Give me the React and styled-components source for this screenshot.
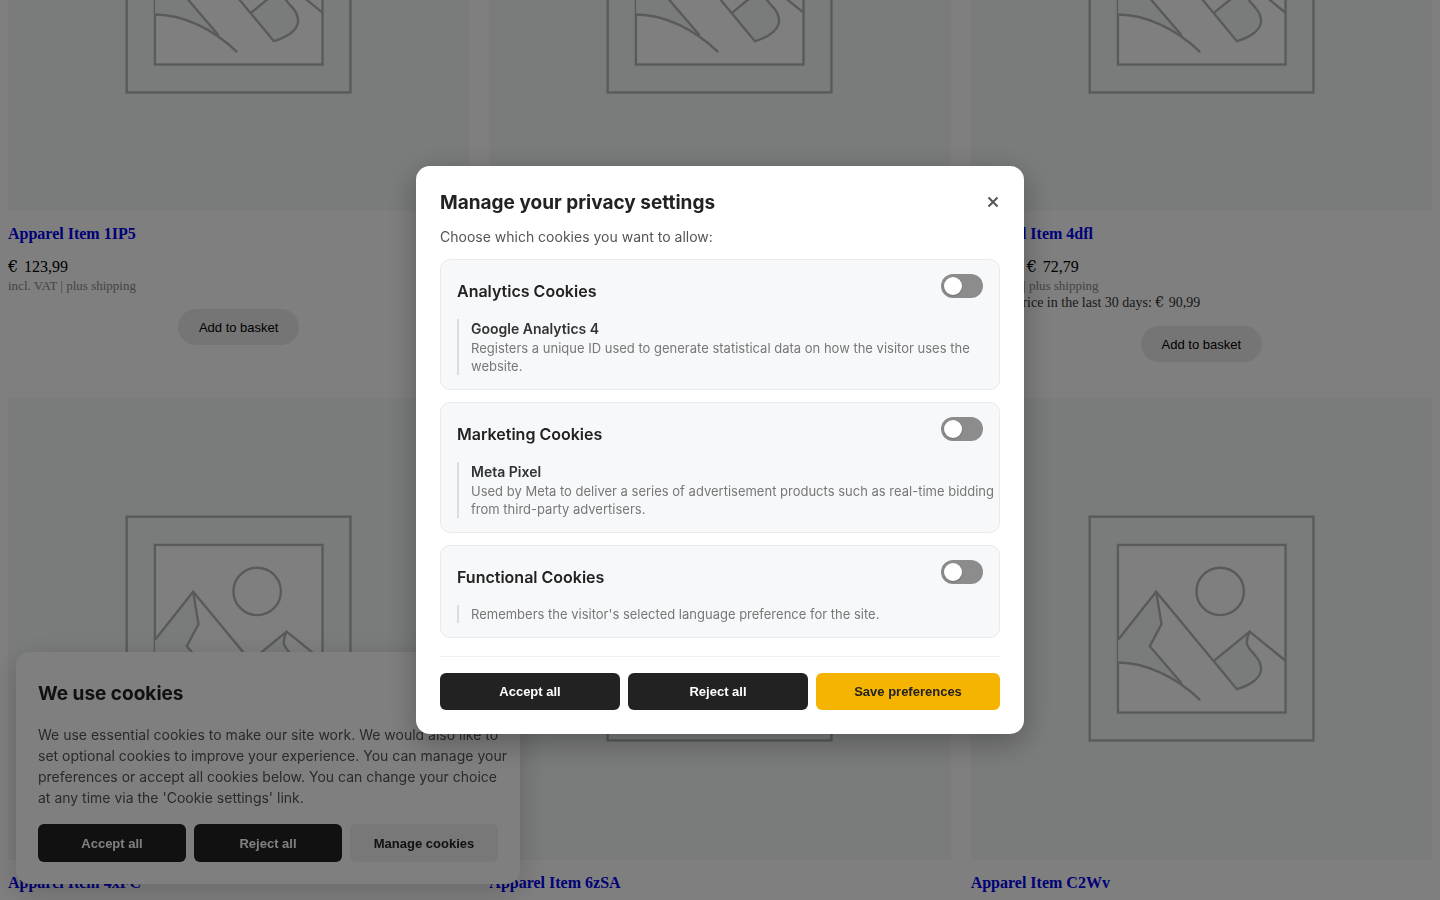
import { useState } from "react";
import styled, { createGlobalStyle } from "styled-components";

const colors = {
    ink: '#222222',
    accent: '#f5b400',
    tile: '#f5f9f7',
    tileLine: '#b3b7b5',
}

const GlobalStyle = createGlobalStyle`
    * {
        box-sizing: border-box;
    }
    body {
        margin: 0;
        background: #ffffff;
        overflow: hidden;
        font-family: "Liberation Serif", "Times New Roman", serif;
    }
`
const Shop = styled.main`
    height: 100vh;
    overflow: hidden;
    padding: 0 8px;
`
/* the list is shown scrolled down to the middle of its first row */
const ProductGrid = styled.ul`
    display: grid;
    grid-template-columns: repeat(3, minmax(0, 1fr));
    gap: 20px;
    list-style: none;
    margin: -250px 0 0;
    padding: 0;
`
const ProductCard = styled.li`
    display: flex;
    flex-direction: column;
    padding-bottom: 16px;
`
const Thumbnail = styled.svg`
    display: block;
    width: 100%;
    aspect-ratio: 1;
    background: ${colors.tile};
    fill: none;
    stroke: ${colors.tileLine};
    stroke-width: 2.4;
`
const ProductName = styled.h2`
    margin: 14px 0;
    font-size: 16px;
    line-height: 18px;
    & a {
        color: #0000ee;
        text-decoration: none;
    }
`
const Price = styled.div`
    font-size: 16px;
    line-height: 20px;
`
const Note = styled.div`
    font-size: ${(props) => props.$dark ? '14px' : '13px'};
    line-height: 17px;
    color: ${(props) => props.$dark ? '#333333' : '#888888'};
`
const Euro = styled.span`
    display: inline-block;
    width: ${(props) => props.$small ? '10px' : '12px'};
    line-height: 1;
    font-family: "DejaVu Serif", serif;
`
const BasketButton = styled.button`
    align-self: center;
    margin-top: 15px;
    padding: 0 21px;
    height: 36px;
    border: none;
    border-radius: 18px;
    background: #ebebeb;
    color: #000000;
    font-family: "Liberation Sans", Arial, sans-serif;
    font-size: 13px;
    cursor: pointer;
`
const Banner = styled.section`
    position: fixed;
    left: 16px;
    bottom: 16px;
    width: 35%;
    padding: 22px;
    border-radius: 14px;
    background: #ffffff;
    box-shadow: 0 8px 30px rgba(0, 0, 0, 0.18);
    color: ${colors.ink};
    font-family: Inter, sans-serif;
`
const BannerTitle = styled.h2`
    margin: 0 0 10px;
    font-size: 19px;
    line-height: 40px;
    font-weight: 700;
`
const BannerText = styled.p`
    margin: 0 -10px 16px 0;
    font-size: 14px;
    line-height: 21px;
    color: #555555;
`
const ButtonRow = styled.div`
    display: flex;
    gap: 8px;
`
const ActionButton = styled.button`
    flex: 1 1 0;
    min-width: ${(props) => props.$variant === 'accent' ? '184px' : '0'};
    height: ${(props) => props.$tall ? '38px' : '37px'};
    padding: 0;
    border: none;
    border-radius: 6px;
    background: ${(props) => {
        if (props.$variant === 'accent') return colors.accent
        if (props.$variant === 'light') return '#f0f0f0'
        return colors.ink
    }};
    color: ${(props) => props.$variant ? colors.ink : '#ffffff'};
    font-family: "Liberation Sans", Arial, sans-serif;
    font-size: 13px;
    font-weight: 700;
    cursor: pointer;
`
const Overlay = styled.div`
    position: fixed;
    inset: 0;
    display: flex;
    align-items: center;
    justify-content: center;
    background: rgba(0, 0, 0, 0.5);
`
const Modal = styled.div`
    width: 608px;
    max-width: 95%;
    padding: 24px;
    border-radius: 14px;
    background: #ffffff;
    box-shadow: 0 8px 30px rgba(0, 0, 0, 0.3);
    color: ${colors.ink};
    font-family: Inter, sans-serif;
`
const ModalHeader = styled.header`
    display: flex;
    justify-content: space-between;
    margin-bottom: 10px;
`
const ModalTitle = styled.h2`
    margin: 0;
    font-size: 19px;
    line-height: 26px;
    font-weight: 700;
`
const CloseButton = styled.button`
    display: flex;
    align-items: center;
    height: 24px;
    padding: 0 1px;
    border: none;
    background: none;
    color: #555555;
    cursor: pointer;
`
const Intro = styled.p`
    margin: 0 0 12px;
    font-size: 14px;
    line-height: 21px;
    color: #555555;
`
const CategoryList = styled.div`
    display: flex;
    flex-direction: column;
    gap: 12px;
`
const Category = styled.section`
    padding: 14px 16px;
    border: 1px solid #e9eaec;
    border-radius: 10px;
    background: #f7f8fa;
`
const CategoryHeader = styled.div`
    display: flex;
    justify-content: space-between;
    align-items: flex-start;
    margin-bottom: 10px;
`
const CategoryTitle = styled.label`
    font-size: 16px;
    line-height: 35px;
    font-weight: 600;
`
const Switch = styled.input`
    appearance: none;
    display: flex;
    justify-content: flex-start;
    align-items: center;
    width: 42px;
    height: 24px;
    margin: 0;
    padding: 3px;
    border-radius: 12px;
    background: #8c8c8c;
    cursor: pointer;
    &::before {
        content: "";
        width: 18px;
        height: 18px;
        border-radius: 50%;
        background: #ffffff;
        box-shadow: 0 1px 2px rgba(0, 0, 0, 0.2);
    }
    &:checked {
        justify-content: flex-end;
        background: ${colors.accent};
    }
`
const Service = styled.div`
    margin-right: -14px;
    padding-left: 12px;
    border-left: 2px solid #dddddd;
`
const ServiceName = styled.h3`
    margin: 0;
    font-size: 14px;
    line-height: 20px;
    font-weight: 600;
    color: #333333;
`
const ServiceText = styled.p`
    margin: 0;
    font-size: 13px;
    line-height: 18px;
    color: #777777;
`
const ModalFooter = styled.footer`
    margin-top: 18px;
    padding-top: 16px;
    border-top: 1px solid #eeeeee;
`

const products = [
    { id: 'p1', name: 'Apparel Item 1IP5', price: '123,99' },
    { id: 'p2' },
    { id: 'p3', name: 'Apparel Item 4dfl', oldPrice: '90,99', price: '72,79' },
    { id: 'p4', name: 'Apparel Item 4xFC' },
    { id: 'p5', name: 'Apparel Item 6zSA' },
    { id: 'p6', name: 'Apparel Item C2Wv' },
]

const categories = [
    {
        id: 'analytics',
        title: 'Analytics Cookies',
        service: 'Google Analytics 4',
        text: 'Registers a unique ID used to generate statistical data on how the visitor uses the website.',
    },
    {
        id: 'marketing',
        title: 'Marketing Cookies',
        service: 'Meta Pixel',
        text: 'Used by Meta to deliver a series of advertisement products such as real-time bidding from third-party advertisers.',
    },
    {
        id: 'functional',
        title: 'Functional Cookies',
        text: "Remembers the visitor's selected language preference for the site.",
    },
]

function Placeholder(){
    return(
        <Thumbnail viewBox="0 0 461 461" aria-hidden="true">
            <rect x="118.600" y="118.600" width="223.600" height="223.600" />
            <rect x="146.800" y="146.800" width="167.500" height="167.500" fill="#ffffff" />
            <path stroke="none" fill={colors.tile} d="M147 241.500 L185 193.500 L190.400 226 L178.700 248 L210.400 285 C190 271 168 264 147 264 Z" />
            <path stroke="none" fill={colors.tile} d="M243 262.500 L278.400 233.500 C272 247 278 250 283 256 C294 268 294 282 265.700 291 Z" />
            <circle cx="249" cy="193.300" r="23.700" />
            <path d="M147 241.500 L185 193.500 L265.700 291 C294 282 294 268 283 256 C278 250 272 247 278.400 233.500 L314.300 262.500" />
            <path d="M243 262.500 L278.400 233.500" />
            <path d="M185 193.500 L190.400 226 L178.700 248 L210.400 285" />
            <path d="M147 264.300 C175 264.300 205 279 229 301.800" />
        </Thumbnail>
    )
}

function Product({ product }){
    return(
        <ProductCard>
            <Placeholder />
            {product.name && <ProductName><a href="#product">{product.name}</a></ProductName>}
            {product.price && (
                <>
                    <Price>
                        {product.oldPrice && <><del><Euro>€</Euro> {product.oldPrice}</del> </>}
                        <Euro>€</Euro> {product.price}
                    </Price>
                    <Note>incl. VAT | plus shipping</Note>
                    {product.oldPrice && (
                        <Note $dark>Lowest price in the last 30 days: <Euro $small>€</Euro> {product.oldPrice}</Note>
                    )}
                    <BasketButton>Add to basket</BasketButton>
                </>
            )}
        </ProductCard>
    )
}

function CookieBanner(){
    return(
        <Banner>
            <BannerTitle>We use cookies</BannerTitle>
            <BannerText>
                We use essential cookies to make our site work. We would also like to set optional
                cookies to improve your experience. You can manage your preferences or accept all
                cookies below. You can change your choice at any time via the 'Cookie settings' link.
            </BannerText>
            <ButtonRow>
                <ActionButton $tall>Accept all</ActionButton>
                <ActionButton $tall>Reject all</ActionButton>
                <ActionButton $tall $variant="light">Manage cookies</ActionButton>
            </ButtonRow>
        </Banner>
    )
}

function PrivacyModal(){
    const [consent, setConsent] = useState({})
    function toggle(id){
        setConsent({...consent, [id]: !consent[id]})
    }

    return(
        <Overlay>
            <Modal role="dialog" aria-labelledby="privacy-title">
                <ModalHeader>
                    <ModalTitle id="privacy-title">Manage your privacy settings</ModalTitle>
                    <CloseButton aria-label="Close">
                        <svg width="12" height="12" viewBox="0 0 12 12" stroke="currentColor" strokeWidth="2" aria-hidden="true">
                            <path d="M1.500 1.500 L10.500 10.500 M10.500 1.500 L1.500 10.500" />
                        </svg>
                    </CloseButton>
                </ModalHeader>
                <Intro>Choose which cookies you want to allow:</Intro>
                <CategoryList>
                    {categories.map((category) => (
                        <Category key={category.id}>
                            <CategoryHeader>
                                <CategoryTitle htmlFor={category.id}>{category.title}</CategoryTitle>
                                <Switch
                                    type="checkbox"
                                    id={category.id}
                                    checked={!!consent[category.id]}
                                    onChange={() => toggle(category.id)}
                                />
                            </CategoryHeader>
                            <Service>
                                {category.service && <ServiceName>{category.service}</ServiceName>}
                                <ServiceText>{category.text}</ServiceText>
                            </Service>
                        </Category>
                    ))}
                </CategoryList>
                <ModalFooter>
                    <ButtonRow>
                        <ActionButton>Accept all</ActionButton>
                        <ActionButton>Reject all</ActionButton>
                        <ActionButton $variant="accent">Save preferences</ActionButton>
                    </ButtonRow>
                </ModalFooter>
            </Modal>
        </Overlay>
    )
}

function App(){
    return(
        <>
            <GlobalStyle />
            <Shop>
                <ProductGrid>
                    {products.map((product) => <Product key={product.id} product={product} />)}
                </ProductGrid>
            </Shop>
            <CookieBanner />
            <PrivacyModal />
        </>
    )
}

export default App;
